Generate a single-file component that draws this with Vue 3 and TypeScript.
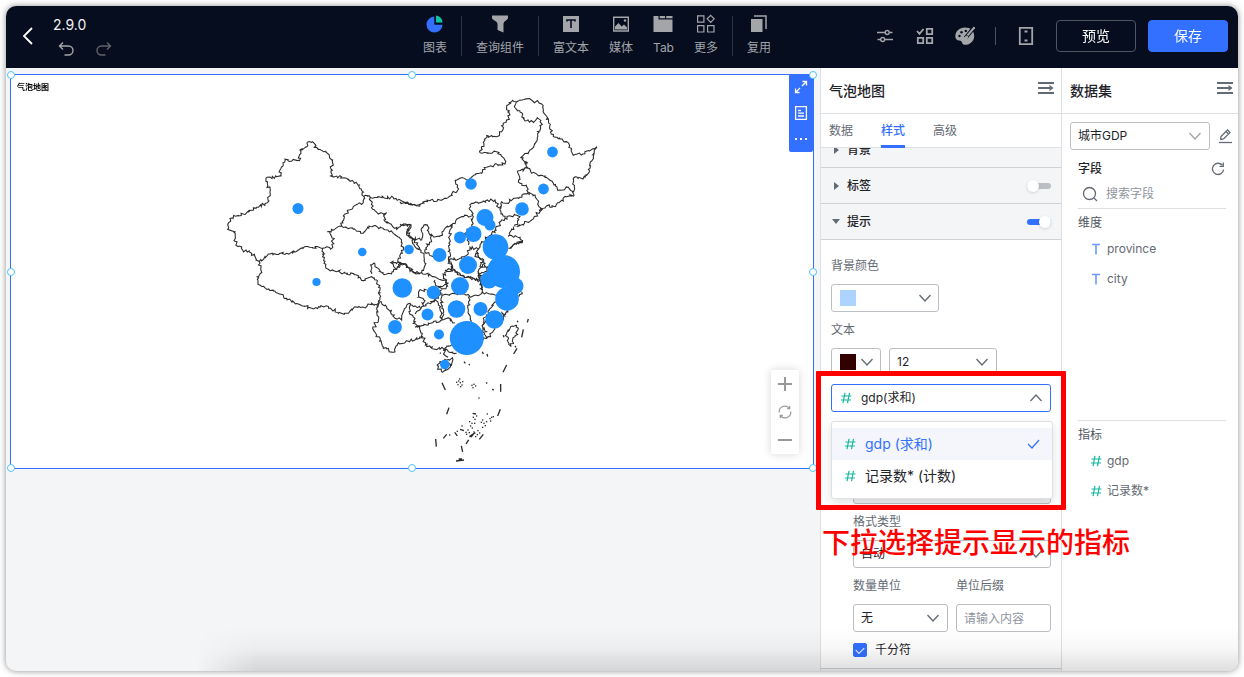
<script setup lang="ts">
import { ref } from 'vue'

interface Sheet {
  x: number
  y: number
  lines: string[]
}

// Boundary polylines, grouped by map sheet. Sheet units are a third of a map unit.
const sheets: Sheet[] = [
  {
    x: 220,
    y: 90,
    lines: [
      '432,320 418,285 380,265 332,258 337,215 325,192 290,172 277,155 262,157 258,172 240,180 238,212 215,213 195,208 190,225 180,240 183,258 138,265 150,305 143,338 110,352 80,368 30,385 23,405 28,420 45,425 46,445 42,452 68,480 95,490 118,515',
      '118,515 145,492 210,490 265,470 308,475 335,475 340,445 322,425 365,408 370,378 400,350 430,338 432,320',
      '118,515 122,550 110,560 120,585 160,603 200,625 235,642 275,655 300,652 320,648 355,670 380,670 400,655 440,650 455,640 470,645 480,630',
      '308,475 312,520 325,538 375,550 410,555 430,572 455,560 470,570 480,600 480,630',
      '365,408 400,418 430,430 447,408 490,415 520,430 545,450 550,480 535,505 540,520 530,540',
      '455,552 452,525 465,522 480,545 500,552 520,545 545,520 560,525 580,545 600,552',
      '530,540 512,518 535,516 545,520',
      '432,320 520,323 550,335 590,347 600,342',
      '450,322 458,358 475,372 500,368 492,390 530,418 545,405 572,405 560,435 585,450 600,480'
    ]
  },
  {
    x: 400,
    y: 90,
    lines: [
      '0,335 50,347 90,332 130,328 150,318 175,295 165,270 185,263 200,270 225,255 245,250 260,232 290,222 315,222 312,205 290,185 270,190 240,188 260,137 290,140 305,125 310,105 330,75 320,50 335,35 360,30 395,30 425,42 437,75 447,100 460,140 500,155 515,178 518,192 548,192 590,173 580,200 570,235 555,262 520,265 520,318 500,320 465,350 440,348 420,365 395,390 350,410',
      '350,36 343,50 352,62 365,68 375,93 405,93 412,83 427,103 413,125 410,155 390,180 362,203 378,225 384,218 372,214',
      '378,225 388,235 352,243',
      '388,235 395,250 435,258 460,280 480,300 500,292 520,305',
      '352,243 360,280 380,285 382,310 405,315 415,345 422,365',
      '382,312 345,325 315,340 305,335 300,360 315,385',
      '315,385 345,375 360,380 345,410',
      '315,385 285,420',
      '300,360 285,330 262,330 235,340 215,340 210,360 220,380 215,405 195,430 205,465',
      '215,378 185,380 160,400 150,420 150,480 145,510',
      '160,400 135,415 120,440 90,435 82,405 72,405 65,425 65,450 35,445 20,425 33,405 0,403',
      '35,445 45,470 70,490 75,520 65,548',
      '90,435 95,455 80,462 78,490 100,500 120,490',
      '0,520 20,525 40,548 65,548 100,560 135,570 140,585 115,592',
      '145,510 185,505 205,490 210,472 235,478',
      '145,510 160,540 190,560 220,565 243,575 245,600',
      '135,540 160,540',
      '235,478 245,455 275,430 290,420',
      '325,440 350,440 367,452 345,460 325,475',
      '330,435 340,410',
      '235,478 225,500 250,510 240,530 265,530 255,545 235,550 243,575'
    ]
  },
  {
    x: 360,
    y: 240,
    lines: [
      '60,185 80,200 105,235 125,240 130,215 150,190 160,200 185,205',
      '225,120 230,138 250,146 262,138 260,120 250,115 254,97 275,92',
      '200,150 178,152 175,172 195,182 185,200',
      '210,185 235,175 245,150',
      '60,185 50,205 55,240 38,265 50,285 65,310 70,325 105,335 115,308 165,300 187,290 180,260 160,250 165,235 147,215 150,190',
      '165,222 185,200 225,180 242,200 245,240 205,255 165,262',
      '187,290 200,320 240,328 265,318 280,308',
      '245,240 270,235 285,248',
      '245,160 248,235',
      '245,165 300,158 330,170 325,210 335,245',
      '270,60 275,85 300,105 340,115 365,125 365,160 330,172',
      '365,160 405,165 415,175 388,210 372,240 368,275 385,290',
      '350,45 375,70 355,95 365,125',
      '485,155 470,180 440,215 425,245 385,290 370,300',
      '425,215 436,230',
      '380,240 368,260 382,275',
      '290,340 265,335 255,325 254,345 264,352',
      '232,378 240,365 255,358 278,357 276,368 264,388 244,394 234,386 232,378',
      '470,255 475,265 465,290 453,320 442,302 440,282 458,258 470,255',
      '450,25 465,12 486,8 488,0'
    ]
  }
]

let seed = 11
function random(): number {
  seed = (seed * 16807) % 2147483647
  return seed / 2147483647 - 0.5
}

// Adds the small wiggle of a surveyed border between the given vertices.
function roughen(line: string): string {
  const pts = line.split(' ').map((p) => p.split(',').map(Number))
  let d = `M${pts[0][0]} ${pts[0][1]}`
  for (let i = 1; i < pts.length; i++) {
    const [ax, ay] = pts[i - 1]
    const [bx, by] = pts[i]
    const steps = Math.max(1, Math.round(Math.hypot(bx - ax, by - ay) / 5))
    for (let s = 1; s < steps; s++) {
      const t = s / steps
      d += `L${(ax + (bx - ax) * t + random() * 9).toFixed(1)} ${(ay + (by - ay) * t + random() * 9).toFixed(1)}`
    }
    d += `L${bx} ${by}`
  }
  return d
}

const borders = sheets.map((s) => ({ x: s.x, y: s.y, d: s.lines.map(roughen).join('') }))

const dashes =
  'M505 237L502 247M490 268L485 292M471 325L461 342M440 375L429 397M422 432V455M421 508L413 528M370 583L358 598M267 503L260 523M246 428L256 450M227 597L229 620M260 583L250 595M288 663L312 660M296 657H306M328 590L346 578M332 592L340 583M338 520L348 522M304 618L308 636M284 577L292 588M300 568L312 572M318 612L326 600M367 335L370 342M381 342L383 350M312 365L316 370M327 372L329 376M430 286L432 292M472 242L474 247M465 318L468 322M379 427L381 431M397 447L401 451M240 338L242 341'

const isles: [number, number][] = [
  [288, 425], [292, 432], [297, 415], [299, 426], [304, 433], [306, 423], [294, 421], [300, 438],
  [334, 434], [340, 431], [345, 436], [337, 441], [355, 472], [327, 543], [334, 548], [338, 530],
  [343, 536], [342, 548], [330, 556], [335, 562], [348, 526], [352, 570], [357, 577], [362, 545],
  [366, 538], [370, 548], [374, 555], [366, 560], [378, 543], [380, 520], [388, 534], [393, 530],
  [398, 528], [390, 541], [322, 568], [326, 576], [318, 581], [304, 556], [340, 574], [267, 583],
  [290, 572], [345, 588], [350, 582], [316, 575]
]

const bubbles: [number, number, number][] = [
  [298, 208.5, 5.5], [362.3, 252, 4.3], [316.5, 282, 4.1], [552.5, 152, 5.4], [543.5, 189, 5.4],
  [522, 209, 6.8], [471, 184, 5.8], [485, 217.5, 8.5], [490, 225, 5.5], [473.5, 234, 8],
  [460, 237.5, 6], [409, 249.5, 4.8], [439.5, 255, 7], [495.5, 247, 12.8], [468, 265, 9],
  [503.5, 271.5, 16.5], [489, 280, 8.6], [515, 286, 8.5], [507, 299, 11.8], [460, 286, 9],
  [402.3, 288, 9.8], [433.5, 292.5, 6.8], [456.5, 309, 8.8], [480.5, 309, 7], [494.5, 319.5, 9.2],
  [427.5, 314.5, 6], [395, 327, 6.9], [439, 334.5, 5], [466.8, 338, 17], [444.8, 364.5, 4.8]
]

const handles = ['nw', 'n', 'ne', 'w', 'e', 'sw', 's', 'se']
const tabs = ['数据', '样式', '高级']
const activeTab = ref('样式')
const tooltipMetric = ref('gdp(求和)')
const metricOptions = ['gdp (求和)', '记录数* (计数)']
const labelOn = ref(false)
const tooltipOn = ref(true)
const thousands = ref(true)
</script>

<template>
  <div class="page">
    <div class="window">
      <header class="topbar">
        <div class="file">
          <button class="icon-btn" aria-label="返回">
            <svg class="back" viewBox="0 0 12 18"><path d="M10 1L2 9l8 8" /></svg>
          </button>
          <div class="file-info">
            <span class="file-name">2.9.0</span>
            <div class="history">
              <button class="icon-btn" aria-label="撤销">
                <svg viewBox="0 0 16 16"><path d="M5 1.500L1.500 5L5 8.500M1.500 5H10.500a4.500 4.500 0 0 1 0 9H6.500" /></svg>
              </button>
              <button class="icon-btn dim" aria-label="重做">
                <svg viewBox="0 0 16 16"><path d="M11 1.500L14.500 5L11 8.500M14.500 5H5.500a4.500 4.500 0 0 0 0 9H9.500" /></svg>
              </button>
            </div>
          </div>
        </div>

        <nav class="tools">
          <button class="tool">
            <svg viewBox="0 0 20 20"><path d="M9.300 2.500v8.200H17.500A8 8 0 1 1 9.300 2.500z" fill="#3370ff" /><path d="M11 1.500a7 7 0 0 1 6.500 7H11z" fill="#0cc7a5" /></svg>
            图表
          </button>
          <i class="sep"></i>
          <button class="tool">
            <svg viewBox="0 0 20 20"><path d="M2 1.500H18V4c0 2-4.500 3-4.500 6v8.500L7.500 16v-6C7.500 7 2 6 2 4z" fill="currentColor" /></svg>
            查询组件
          </button>
          <i class="sep"></i>
          <div class="tool-group">
            <button class="tool">
              <svg viewBox="0 0 20 20"><path d="M2 2H18V18H2z" fill="currentColor" /><path d="M6 7.500V6H14V7.500M10 6V14" fill="none" stroke="#050d1f" stroke-width="1.600" /></svg>
              富文本
            </button>
            <button class="tool">
              <svg viewBox="0 0 20 20"><path d="M2.700 3.200H17.300V17H2.700z" fill="none" stroke="currentColor" stroke-width="1.400" /><path d="M4 15.500V12.500L7.500 9l3.200 3.500L13 10.500l3 3v2z" fill="currentColor" /><circle cx="14" cy="6.500" r="1.200" fill="currentColor" /></svg>
              媒体
            </button>
            <button class="tool">
              <svg viewBox="0 0 20 20"><path d="M.5 2H5.500V5.500H19.500V18H.5z" fill="currentColor" /><path d="M6.700 2H12V4.300H6.700zM13.200 2H19.500V4.300H13.200z" fill="currentColor" /></svg>
              Tab
            </button>
            <button class="tool">
              <svg viewBox="0 0 20 20" fill="none" stroke="currentColor" stroke-width="1.200"><path d="M1.600 1.800H7.900V8.200H1.600zM1.600 11.600H7.900V18H1.600zM11.600 11.600H18V18H11.600zM14.700 1.300L18.200 4.800L14.700 8.300L11.200 4.800z" /></svg>
              更多
            </button>
          </div>
          <i class="sep"></i>
          <button class="tool">
            <svg viewBox="0 0 20 20"><path d="M2 5H13.500V18H2z" fill="currentColor" /><path d="M5 2H17V15" fill="none" stroke="currentColor" stroke-width="1.500" /></svg>
            复用
          </button>
        </nav>

        <div class="actions">
          <button class="icon-btn" aria-label="筛选设置">
            <svg viewBox="0 0 20 20"><path d="M2 6.500H10M14.500 6.500H17.500M2.500 13.500H5.500M10 13.500H18" /><circle cx="12.200" cy="6.500" r="2" /><circle cx="7.700" cy="13.500" r="2" /></svg>
          </button>
          <button class="icon-btn" aria-label="批量选择">
            <svg viewBox="0 0 20 20" class="bold"><path d="M2 5L4.500 7.800L8.500 3M11.800 2.800H17.200V8.200H11.800zM2.800 11.800H8.200V17.200H2.800zM11.800 11.800H17.200V17.200H11.800z" /></svg>
          </button>
          <button class="icon-btn" aria-label="主题">
            <svg viewBox="0 0 20 20"><path d="M10 1.500C4.500 1.500.3 5.200.3 10.200c0 2.600 1.500 4.200 3.900 4.200 2 0 2.600 1 2.900 2.300.4 1.700 2 2.300 4.300 2 4.600-.7 7.800-4.400 7.800-8.800C19.200 5 15.500 1.500 10 1.500z" fill="currentColor" stroke="none" /><g fill="#050d1f" stroke="none"><circle cx="4.500" cy="10" r="1.200" /><circle cx="6.500" cy="6.200" r="1.200" /><circle cx="10.800" cy="4.900" r="1.200" /></g><path d="M19 1.500L10.500 12" stroke="#050d1f" stroke-width="4" /><path d="M19.500 1.200L12.500 9.500" stroke-width="2" /><path d="M11.700 10.300c-1.500.3-1.200 2-2.700 2.700 1.800.6 3.600-.3 3.500-1.900z" fill="currentColor" /></svg>
          </button>
          <i class="sep short"></i>
          <button class="icon-btn" aria-label="移动端布局">
            <svg viewBox="0 0 20 20" class="bold"><path d="M3.800 1.800H16.200V18.200H3.800z" /><path d="M8.500 5.500H11.500M8.500 14.500H11.500" /></svg>
          </button>
          <div class="main-actions">
            <button class="btn">预览</button>
            <button class="btn primary">保存</button>
          </div>
        </div>
      </header>

      <div class="workspace">
        <main class="canvas">
          <section class="card">
            <h2 class="card-title">气泡地图</h2>
            <svg class="map" viewBox="11 95 802 373" role="img" aria-label="气泡地图">
              <g v-for="b in borders" :key="b.x" :transform="`translate(${b.x} ${b.y}) scale(.3333)`">
                <path class="border" :d="b.d" />
              </g>
              <g transform="translate(360 240) scale(.3333)">
                <path class="border mark" :d="dashes" />
                <rect v-for="(p, i) in isles" :key="i" class="isle" :x="p[0]" :y="p[1]" width="4" height="4" />
              </g>
              <circle v-for="(c, i) in bubbles" :key="i" class="bubble" :cx="c[0]" :cy="c[1]" :r="c[2]" />
            </svg>
            <div class="card-tools">
              <button aria-label="放大">
                <svg viewBox="0 0 14 14"><path d="M8.500 1.500H12.500V5.500M12.500 1.500L8 6M5.500 12.500H1.500V8.500M1.500 12.500L6 8" /></svg>
              </button>
              <button aria-label="查看数据">
                <svg viewBox="0 0 14 14"><path d="M1.600 .7H12.400V13.300H1.600zM4 4.500H7M4 7.200H10M4 10H10" /></svg>
              </button>
              <button aria-label="更多">
                <svg viewBox="0 0 14 14"><path d="M1 7H3M6 7H8M11 7H13" stroke-width="2" /></svg>
              </button>
            </div>
            <div class="map-zoom">
              <button aria-label="放大地图"><svg viewBox="0 0 14 14"><path d="M7 0V14M0 7H14" /></svg></button>
              <button aria-label="还原"><svg class="thin" viewBox="0 0 14 14"><path d="M1.200 7.500A5.800 5.800 0 0 1 11.500 3.300M12.800 6.500A5.800 5.800 0 0 1 2.500 10.700M11.700 1V3.600H9.200M2.300 13V10.400H4.800" /></svg></button>
              <button aria-label="缩小地图"><svg viewBox="0 0 14 14"><path d="M0 7H14" /></svg></button>
            </div>
            <i v-for="h in handles" :key="h" class="handle" :class="h"></i>
          </section>
        </main>

        <div class="sidebars">
          <aside class="panel style-panel">
            <div class="panel-head">
              <h3>气泡地图</h3>
              <button class="icon-btn" aria-label="收起样式面板">
                <svg viewBox="0 0 16 14" class="fold"><path d="M0 2H16M0 7H12M0 12H16" /><path d="M11.500 4L15.500 7L11.500 10z" class="tip" /></svg>
              </button>
            </div>
            <div class="tabs" role="tablist">
              <button v-for="t in tabs" :key="t" role="tab" :aria-selected="t === activeTab" :class="{ active: t === activeTab }" @click="activeTab = t">{{ t }}</button>
            </div>
            <div class="panel-body">
              <div class="fold-row first">
                <button class="fold-btn"><i class="caret"></i>背景</button>
              </div>
              <div class="fold-row">
                <button class="fold-btn"><i class="caret"></i>标签</button>
                <input v-model="labelOn" class="switch" type="checkbox" role="switch" aria-label="标签" />
              </div>
              <div class="fold-row">
                <button class="fold-btn"><i class="caret open"></i>提示</button>
                <input v-model="tooltipOn" class="switch" type="checkbox" role="switch" aria-label="提示" />
              </div>
              <div class="form">
                <span class="label">背景颜色</span>
                <button class="control picker wide" aria-label="背景颜色">
                  <i class="swatch sky"></i>
                  <svg class="chev" viewBox="0 0 12 8"><path d="M.5 1L6 7L11.500 1" /></svg>
                </button>
                <label class="label" for="font-size">文本</label>
                <div class="row">
                  <button class="control picker small" aria-label="文本颜色">
                    <i class="swatch maroon"></i>
                    <svg class="chev" viewBox="0 0 12 8"><path d="M.5 1L6 7L11.500 1" /></svg>
                  </button>
                  <div class="select wide">
                    <select id="font-size" class="control"><option>12</option></select>
                    <svg class="chev" viewBox="0 0 12 8"><path d="M.5 1L6 7L11.500 1" /></svg>
                  </div>
                </div>
                <div class="select metric">
                  <svg class="hash" viewBox="0 0 12 12"><path d="M5 .8L3 11.200M9.500 .8L7.500 11.200M1.500 4H11.500M1 8H11" /></svg>
                  <select v-model="tooltipMetric" class="control" aria-label="提示指标"><option>gdp(求和)</option></select>
                  <svg class="chev" viewBox="0 0 12 8"><path d="M.5 7L6 1L11.500 7" /></svg>
                  <div class="menu" role="listbox" aria-label="指标选项">
                    <button v-for="(o, i) in metricOptions" :key="o" role="option" :aria-selected="i === 0" :class="{ chosen: i === 0 }">
                      <svg class="hash" viewBox="0 0 12 12"><path d="M5 .8L3 11.200M9.500 .8L7.500 11.200M1.500 4H11.500M1 8H11" /></svg>
                      <span>{{ o }}</span>
                      <svg v-if="i === 0" class="tick" viewBox="0 0 12 10"><path d="M.5 5L4.500 9L11.500 1" /></svg>
                    </button>
                  </div>
                </div>
                <div class="sub">
                  <div class="control disabled"></div>
                  <label class="label" for="format">格式类型</label>
                  <div class="select">
                    <select id="format" class="control"><option>自动</option></select>
                    <svg class="chev" viewBox="0 0 12 8"><path d="M.5 1L6 7L11.500 1" /></svg>
                  </div>
                  <div class="pair">
                    <div class="field">
                      <label class="label" for="unit">数量单位</label>
                      <div class="select">
                        <select id="unit" class="control"><option>无</option></select>
                        <svg class="chev" viewBox="0 0 12 8"><path d="M.5 1L6 7L11.500 1" /></svg>
                      </div>
                    </div>
                    <div class="field">
                      <label class="label" for="suffix">单位后缀</label>
                      <input id="suffix" class="control" type="text" placeholder="请输入内容" />
                    </div>
                  </div>
                  <label class="check"><input v-model="thousands" type="checkbox" />千分符</label>
                </div>
              </div>
              <div class="fold-row"></div>
            </div>
          </aside>

          <aside class="panel data-panel">
            <div class="panel-head">
              <h3>数据集</h3>
              <button class="icon-btn" aria-label="收起数据面板">
                <svg viewBox="0 0 16 14" class="fold"><path d="M0 2H16M0 7H12M0 12H16" /><path d="M11.500 4L15.500 7L11.500 10z" class="tip" /></svg>
              </button>
            </div>
            <div class="dataset">
              <div class="select">
                <select class="control" aria-label="数据集"><option>城市GDP</option></select>
                <svg class="chev light" viewBox="0 0 12 8"><path d="M.5 1L6 7L11.500 1" /></svg>
              </div>
              <button class="icon-btn" aria-label="编辑数据集">
                <svg viewBox="0 0 16 16"><path d="M3.500 11.500L4 8.500L10.500 2L13 4.500L6.500 11L3.500 11.500M9 3.500L11.500 6" /><path d="M2 14.500H15" /></svg>
              </button>
            </div>
            <div class="fields">
              <div class="fields-head">
                <h4>字段</h4>
                <button class="icon-btn" aria-label="刷新字段">
                  <svg viewBox="0 0 16 16"><path d="M12.300 4.200A5.600 5.600 0 1 0 13.600 8.600M13.300 1.500V5.300H9.500" /></svg>
                </button>
              </div>
              <div class="search">
                <svg viewBox="0 0 16 16"><circle cx="7.500" cy="7.500" r="6" /><path d="M12 12L15 15" /></svg>
                <input type="search" placeholder="搜索字段" aria-label="搜索字段" />
              </div>
              <h5>维度</h5>
              <ul class="dims">
                <li><svg class="tee" viewBox="0 0 12 12"><path d="M2 1.500H10M6 1.500V11.500" /></svg>province</li>
                <li><svg class="tee" viewBox="0 0 12 12"><path d="M2 1.500H10M6 1.500V11.500" /></svg>city</li>
              </ul>
              <h5>指标</h5>
              <ul>
                <li><svg class="hash" viewBox="0 0 12 12"><path d="M5 .8L3 11.200M9.500 .8L7.500 11.200M1.500 4H11.500M1 8H11" /></svg>gdp</li>
                <li><svg class="hash" viewBox="0 0 12 12"><path d="M5 .8L3 11.200M9.500 .8L7.500 11.200M1.500 4H11.500M1 8H11" /></svg>记录数*</li>
              </ul>
            </div>
          </aside>

          <div class="marker"></div>
          <p class="note">下拉选择提示显示的指标</p>
        </div>
      </div>
      <div class="shade"></div>
    </div>
  </div>
</template>

<style>
body {
  background: #fff;
}
</style>

<style scoped>
.page {
  box-sizing: border-box;
  height: 100vh;
  padding: 6px;
  font-family: Inter, "Noto Sans CJK SC", sans-serif;
  font-size: 12px;
  line-height: 20px;
  color: #1f2329;
  filter: drop-shadow(0 0 3px rgba(0, 0, 0, 0.45));
}
.page *,
.page *::before,
.page *::after {
  box-sizing: border-box;
}
button,
input,
select {
  margin: 0;
  font: inherit;
  color: inherit;
}
button {
  padding: 0;
  border: 0;
  background: none;
  cursor: pointer;
}
h2, h3, h4, h5, p, ul {
  margin: 0;
  padding: 0;
  font-weight: 400;
  list-style: none;
}
svg {
  display: block;
  flex: none;
}
.window {
  position: relative;
  display: flex;
  flex-direction: column;
  height: 100%;
  overflow: hidden;
  border-radius: 10px;
  background: #f4f5f7;
}

/* top bar */
.topbar {
  display: flex;
  flex: none;
  align-items: center;
  height: 62px;
  padding: 0 10px 2px 0;
  background: #050d1f;
  color: #a3a5a9;
}
.file {
  display: flex;
  flex: 1;
  align-items: center;
  gap: 19px;
  padding-left: 16px;
}
.back {
  width: 12px;
  height: 18px;
  fill: none;
  stroke: #fff;
  stroke-width: 1.8;
}
.file-info {
  display: flex;
  flex-direction: column;
  gap: 6px;
}
.file-name {
  font-size: 14px;
  color: #f0f1f3;
}
.history {
  display: flex;
  gap: 22px;
  padding-left: 5px;
}
.history svg {
  width: 16px;
  height: 16px;
  fill: none;
  stroke: currentColor;
  stroke-width: 1.4;
}
.dim {
  color: #606368;
}
.tools {
  display: flex;
  align-items: center;
  gap: 14px;
}
.tool-group {
  display: flex;
  gap: 20px;
}
.tool {
  display: flex;
  flex-direction: column;
  align-items: center;
  gap: 4px;
}
.tool svg {
  width: 20px;
  height: 20px;
}
.sep {
  width: 1px;
  height: 40px;
  background: #2b3242;
}
.sep.short {
  height: 18px;
  background: #4a505d;
}
.actions {
  display: flex;
  align-items: center;
  gap: 20px;
  margin-left: 104px;
}
.actions svg {
  width: 20px;
  height: 20px;
  fill: none;
  stroke: currentColor;
  stroke-width: 1.4;
}
.actions svg.bold {
  stroke-width: 1.8;
}
.main-actions {
  display: flex;
  gap: 12px;
}
.btn {
  width: 80px;
  height: 32px;
  border: 1px solid #50565f;
  border-radius: 4px;
  font-size: 14px;
  color: #fff;
}
.btn.primary {
  border-color: #3370ff;
  background: #3370ff;
}

/* canvas */
.workspace {
  display: flex;
  flex: 1;
  min-height: 0;
}
.canvas {
  flex: 1;
  min-width: 0;
  padding: 6px 6px 0 4px;
}
.card {
  position: relative;
  border: 1px solid #3370ff;
  background: #fff;
}
.card-title {
  height: 20px;
  padding: 2px 6px 0;
  font-size: 8px;
  font-weight: 700;
  color: #000;
}
.map {
  width: 100%;
}
.border {
  fill: none;
  stroke: #2b2b2b;
  stroke-width: 3.2;
}
.border.mark {
  stroke-width: 4;
}
.isle {
  fill: #333;
}
.bubble {
  fill: #1e90ff;
}
.card-tools {
  position: absolute;
  top: -1px;
  right: 0;
  display: flex;
  flex-direction: column;
  width: 24px;
  border-radius: 2px;
  background: #3370ff;
}
.card-tools button {
  display: grid;
  place-items: center;
  height: 26px;
}
.card-tools svg {
  width: 14px;
  height: 14px;
  fill: none;
  stroke: #fff;
  stroke-width: 1.3;
}
.map-zoom {
  position: absolute;
  right: 14px;
  bottom: 14px;
  display: flex;
  flex-direction: column;
  width: 28px;
  background: #fff;
  box-shadow: 0 0 8px rgba(0, 0, 0, 0.16);
}
.map-zoom button {
  display: grid;
  place-items: center;
  height: 28px;
}
.map-zoom svg {
  width: 14px;
  height: 14px;
  fill: none;
  stroke: #999;
  stroke-width: 2;
}
.map-zoom svg.thin {
  stroke-width: 1.2;
}
.handle {
  position: absolute;
  width: 8px;
  height: 8px;
  border: 1px solid #4fc3f7;
  border-radius: 50%;
  background: #fff;
  transform: translate(-50%, -50%);
}
.nw, .n, .ne { top: 0; }
.w, .e { top: 50%; }
.sw, .s, .se { top: 100%; }
.nw, .w, .sw { left: 0; }
.n, .s { left: 50%; }
.ne, .e, .se { left: 100%; }

/* panels */
.sidebars {
  position: relative;
  display: flex;
  flex: none;
}
.panel {
  display: flex;
  flex-direction: column;
  min-height: 0;
  border-left: 1px solid #dee0e3;
  background: #fff;
}
.style-panel {
  width: 241px;
}
.data-panel {
  width: 177px;
}
.panel-head {
  display: flex;
  flex: none;
  justify-content: space-between;
  height: 46px;
  padding: 0 7px 0 8px;
  border-bottom: 1px solid #dee0e3;
}
.data-panel .panel-head {
  padding-right: 5px;
}
.panel-head h3 {
  font-size: 14px;
  font-weight: 500;
  line-height: 46px;
}
.panel-head .icon-btn {
  height: 40px;
}
.fold {
  width: 16px;
  height: 14px;
  stroke: #646a73;
  stroke-width: 2;
}
.fold .tip {
  fill: #646a73;
  stroke: none;
}
.tabs {
  display: flex;
  flex: none;
  gap: 28px;
  height: 34px;
  padding-left: 8px;
  border-bottom: 1px solid #dee0e3;
  color: #646a73;
}
.tabs button {
  height: 34px;
  border-top: 3px solid transparent;
  border-bottom: 3px solid transparent;
}
.tabs .active {
  border-bottom-color: #3370ff;
  font-weight: 500;
  color: #3370ff;
}
.panel-body {
  flex: 1;
  min-height: 0;
  overflow: hidden;
}
.fold-row {
  display: flex;
  align-items: center;
  justify-content: space-between;
  height: 36px;
  padding: 0 10px;
  border-bottom: 1px solid #d0d3d6;
  background: #f4f5f7;
}
.fold-row.first {
  margin-top: -16px;
}
.form + .fold-row {
  border-top: 1px solid #d0d3d6;
}
.fold-btn {
  display: flex;
  align-items: center;
  gap: 6px;
  font-weight: 500;
}
.caret {
  display: grid;
  place-items: center;
  width: 10px;
  height: 10px;
}
.caret::before {
  content: "";
  border: 4px solid transparent;
  border-right-width: 0;
  border-left: 5px solid #646a73;
}
.caret.open::before {
  border: 4px solid transparent;
  border-bottom-width: 0;
  border-top: 5px solid #646a73;
}
.switch {
  position: relative;
  width: 24px;
  height: 12px;
  appearance: none;
}
.switch::before {
  content: "";
  position: absolute;
  top: 3px;
  left: 0;
  width: 24px;
  height: 6px;
  border-radius: 3px;
  background: #bbbfc4;
}
.switch::after {
  content: "";
  position: absolute;
  top: 0;
  left: 0;
  width: 12px;
  height: 12px;
  border-radius: 50%;
  background: #fff;
  box-shadow: 0 1px 3px rgba(31, 35, 41, 0.16);
}
.switch:checked::before {
  background: #3370ff;
}
.switch:checked::after {
  left: 12px;
}

/* form */
.form,
.sub,
.field {
  display: flex;
  flex-direction: column;
  gap: 4px;
}
.form {
  padding: 12px 10px 4px;
}
.label {
  height: 28px;
  line-height: 28px;
  color: #646a73;
}
.row,
.pair {
  display: flex;
  gap: 8px;
}
.control {
  width: 100%;
  height: 28px;
  padding: 0 7px;
  border: 1px solid #bbbfc4;
  border-radius: 3px;
  background: #fff;
  appearance: none;
  outline: none;
}
.control::placeholder {
  color: #8f959e;
}
.control.disabled {
  background: #eff0f1;
}
.picker {
  display: flex;
  align-items: center;
  justify-content: space-between;
  padding-left: 8px;
}
.wide {
  width: 108px;
}
.small {
  width: 50px;
}
.swatch {
  width: 16px;
  height: 16px;
}
.sky {
  background: #add4ff;
}
.maroon {
  background: #330000;
}
.chev {
  width: 12px;
  height: 8px;
  fill: none;
  stroke: #646a73;
  stroke-width: 1.3;
}
.chev.light {
  stroke: #a0a4aa;
}
.select {
  position: relative;
}
.select > .chev {
  position: absolute;
  top: 10px;
  right: 9px;
  pointer-events: none;
}
.hash {
  width: 12px;
  height: 12px;
  fill: none;
  stroke: #14b8a0;
  stroke-width: 1.2;
}
.metric {
  margin-top: 4px;
}
.metric > .hash {
  position: absolute;
  top: 8px;
  left: 9px;
}
.metric > .control {
  padding-left: 29px;
  border-color: #3370ff;
}
.menu {
  position: absolute;
  z-index: 2;
  top: 37px;
  left: 0;
  width: 222px;
  padding: 6px 0;
  border: 1px solid #dee0e3;
  border-radius: 3px;
  background: #fff;
  box-shadow: 0 4px 12px rgba(31, 35, 41, 0.14);
}
.menu button {
  display: flex;
  align-items: center;
  gap: 9px;
  width: 100%;
  height: 32px;
  padding: 0 12px;
  font-size: 14px;
  text-align: left;
}
.menu span {
  flex: 1;
}
.menu .chosen {
  background: #f4f6fb;
  color: #3370ff;
}
.tick {
  width: 13px;
  height: 10px;
  fill: none;
  stroke: #3370ff;
  stroke-width: 1.2;
}
.sub {
  margin-top: 60px;
  padding-left: 22px;
}
.field {
  flex: 1;
  min-width: 0;
}
.check {
  display: flex;
  align-items: center;
  gap: 8px;
  height: 28px;
}
.check input {
  display: grid;
  place-items: center;
  width: 14px;
  height: 14px;
  border: 1px solid #bbbfc4;
  border-radius: 2px;
  appearance: none;
}
.check input:checked {
  border-color: #3370ff;
  background: #3370ff;
}
.check input:checked::before {
  content: "";
  width: 8px;
  height: 5px;
  border: 1px solid #fff;
  border-top: 0;
  border-right: 0;
  transform: translateY(-1px) rotate(-45deg);
}

/* dataset panel */
.dataset {
  display: flex;
  gap: 7px;
  padding: 8px 5px 4px 8px;
}
.dataset .select {
  flex: 1;
}
.dataset svg:not(.chev),
.fields-head svg,
.search svg {
  width: 16px;
  height: 16px;
  fill: none;
  stroke: #646a73;
  stroke-width: 1.3;
}
.fields {
  padding: 4px 12px 0 16px;
}
.fields-head {
  display: flex;
  align-items: center;
  justify-content: space-between;
  height: 21px;
}
.fields-head h4 {
  font-size: 12px;
  font-weight: 500;
}
.search {
  display: flex;
  align-items: center;
  gap: 8px;
  height: 30px;
  padding-left: 4px;
  border-bottom: 1px solid #dee0e3;
}
.search input {
  flex: 1;
  min-width: 0;
  padding: 0;
  border: 0;
  outline: none;
  appearance: none;
}
.search input::placeholder {
  color: #8f959e;
}
h5 {
  padding: 4px 0 1px;
  font-size: 12px;
  color: #50565f;
}
ul {
  color: #646a73;
}
.dims {
  min-height: 187px;
  border-bottom: 1px solid #dee0e3;
}
li {
  display: flex;
  align-items: center;
  gap: 5px;
  height: 30px;
  padding-left: 12px;
}
.tee {
  width: 12px;
  height: 12px;
  fill: none;
  stroke: #6e9bff;
  stroke-width: 1.6;
}

/* annotation */
.marker {
  position: absolute;
  z-index: 3;
  top: 303px;
  left: -4px;
  width: 250px;
  height: 139px;
  border: 5px solid #f00;
  border-radius: 1px;
  pointer-events: none;
}
.note {
  position: absolute;
  z-index: 3;
  top: 455px;
  left: 2px;
  font-size: 28px;
  font-weight: 500;
  line-height: 40px;
  white-space: nowrap;
  color: #f00;
}
.shade {
  position: absolute;
  right: 0;
  bottom: 0;
  left: 190px;
  height: 44px;
  background: linear-gradient(to top, rgba(0, 0, 0, 0.13), rgba(0, 0, 0, 0.03) 50%, transparent);
  mask-image: linear-gradient(to right, transparent, #000 60px);
  pointer-events: none;
}
</style>
